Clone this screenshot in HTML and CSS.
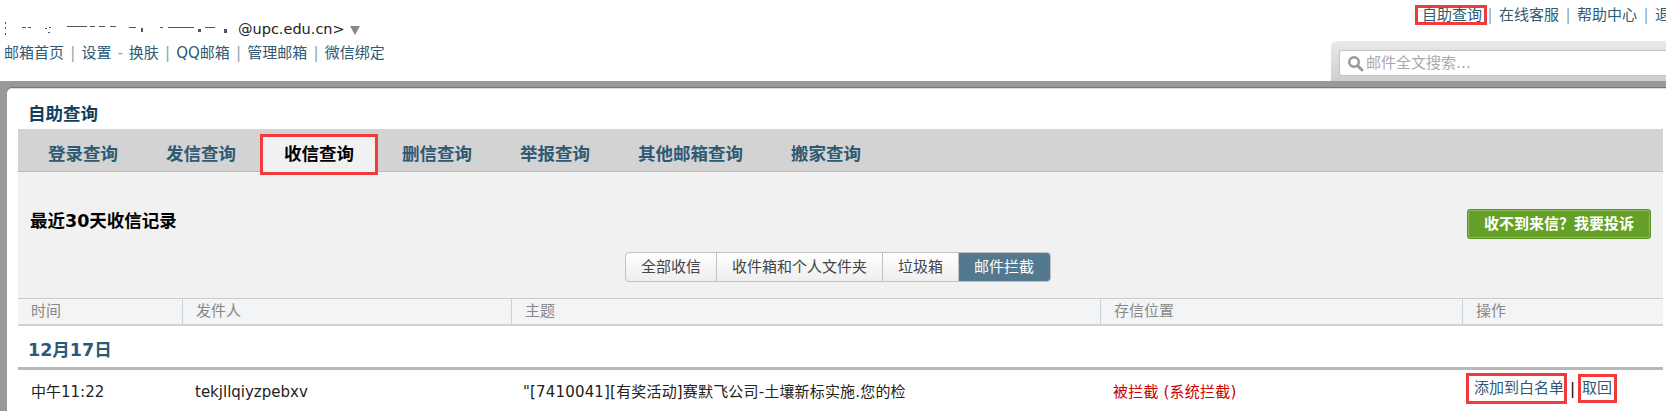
FILE: index.html
```html
<!DOCTYPE html>
<html lang="zh">
<head>
<meta charset="utf-8">
<title>自助查询</title>
<link rel="stylesheet" href="styles.css">
</head>
<body>
<header class="top">
  <div class="account">
    <div class="user">
      <svg class="redact" width="233" height="18" viewBox="0 0 233 18">
        <g fill="#555">
          <rect x="5" y="2" width="1" height="2"/><rect x="5" y="7" width="1" height="2"/><rect x="5" y="13" width="1" height="2"/>
          <rect x="22" y="7" width="4" height="1"/><rect x="28" y="7" width="3" height="1"/>
          <rect x="45" y="8" width="2" height="1"/><rect x="49" y="7" width="2" height="1"/><rect x="48" y="12" width="2" height="1"/>
          <rect x="67" y="6" width="20" height="1"/><rect x="90" y="6" width="5" height="1"/><rect x="99" y="6" width="6" height="1"/><rect x="110" y="6" width="6" height="1"/>
          <rect x="129" y="7" width="7" height="1"/><rect x="141" y="8" width="2" height="4"/>
          <rect x="160" y="7" width="3" height="1"/><rect x="168" y="7" width="26" height="1"/><rect x="198" y="9" width="3" height="3"/><rect x="205" y="7" width="10" height="1"/><rect x="224" y="9" width="3" height="4"/>
        </g>
      </svg>
      <span>@upc.edu.cn&gt;</span><i class="arrow"></i>
    </div>
    <nav class="links">
      <a>邮箱首页</a><span class="sep">|</span><a>设置</a><span class="sep">-</span><a>换肤</a><span class="sep">|</span><a>QQ邮箱</a><span class="sep">|</span><a>管理邮箱</a><span class="sep">|</span><a>微信绑定</a>
    </nav>
  </div>
  <div class="tools">
    <nav class="links help">
      <a class="mark">自助查询</a><span class="sep">|</span><a>在线客服</a><span class="sep">|</span><a>帮助中心</a><span class="sep">|</span><a>退</a>
    </nav>
    <div class="search">
      <div class="search-box">
        <svg class="lens" width="17" height="17" viewBox="0 0 17 17"><circle cx="7" cy="7" r="4.8" fill="none" stroke="#999" stroke-width="2.4"/><path d="M10.6 10.6 15 15" stroke="#999" stroke-width="3" stroke-linecap="round"/></svg>
        <span>邮件全文搜索…</span>
      </div>
    </div>
  </div>
</header>
<main class="frame">
  <div class="card">
    <h1 class="title">自助查询</h1>
    <div class="tabs">
      <a class="tab">登录查询</a><a class="tab">发信查询</a><a class="tab active">收信查询</a><a class="tab">删信查询</a><a class="tab">举报查询</a><a class="tab">其他邮箱查询</a><a class="tab">搬家查询</a>
    </div>
    <section class="panel">
      <div class="panel-head">
        <h2 class="panel-title">最近30天收信记录</h2>
        <a class="complain">收不到来信？我要投诉</a>
      </div>
      <div class="seg">
        <a class="seg-item">全部收信</a><a class="seg-item">收件箱和个人文件夹</a><a class="seg-item">垃圾箱</a><a class="seg-item on">邮件拦截</a>
      </div>
    </section>
    <div class="cols thead">
      <div>时间</div><div>发件人</div><div>主题</div><div>存信位置</div><div>操作</div>
    </div>
    <div class="date">12月17日</div>
    <div class="cols row">
      <div>中午11:22</div>
      <div>tekjllqiyzpebxv</div>
      <div class="subject">"[7410041][有奖活动]赛默飞公司-土壤新标实施.您的检</div>
      <div class="blocked">被拦截 (系统拦截)</div>
      <div class="ops"><a class="mark wide">添加到白名单</a><span class="bar">|</span><a class="mark small">取回</a></div>
    </div>
  </div>
</main>
</body>
</html>
```
FILE: styles.css
```css
* { box-sizing: border-box; }
html, body { margin: 0; height: 411px; overflow: hidden; background: #fff; }
body { font: 15px/20px "DejaVu Sans", "Noto Sans CJK SC", sans-serif; color: #222; }
h1, h2 { margin: 0; }
a { color: #2f5a73; }

.top { display: flex; height: 81px; }
.account { width: 1415px; flex: none; padding: 19px 0 0 0; }
.user { display: flex; align-items: center; height: 20px; font-size: 14.5px; color: #222; }
.redact { flex: none; margin-right: 5px; }
.arrow { width: 0; height: 0; margin: 2px 0 0 5px; border: 5px solid transparent; border-top: 9px solid #888; border-bottom: 0; }
.links { display: flex; align-items: center; height: 20px; white-space: nowrap; }
.links > a { flex: none; }
.account .links { margin: 4px 0 0 4px; }
.sep { width: 18px; text-align: center; color: #8fa3b0; flex: none; }
.account .sep { width: 17.4px; }

.tools { flex: none; width: 251px; }
.help { margin-top: 5px; }
.mark { border: 3px solid #f23a3a; }
.help .mark { width: 72px; height: 20px; line-height: 14px; padding: 0 0 0 4px; margin-right: -6px; overflow: visible; }

.search { margin: 16px 0 0 -84px; width: 335px; height: 40px; padding: 9px 0 5px 8px; background: linear-gradient(#e9e9e9, #cfcfcf); border-radius: 6px 0 0 0; }
.search-box { display: flex; align-items: center; height: 26px; padding-left: 7px; background: #fff; border: 1px solid #c4c4c4; border-right: 0; border-radius: 3px 0 0 3px; color: #aaa; }
.lens { flex: none; margin-right: 2px; }

.frame { background: #999; padding: 7px 0 0 7px; height: 330px; }
.card { height: 323px; padding: 0 3px 0 11px; background: #fff; border-top: 1px solid #ddd; border-top-left-radius: 5px; box-shadow: 0 -1px 0 #777; }
.title { height: 40px; padding: 15px 0 0 10px; font-size: 17.5px; line-height: 20px; color: #123f5c; font-weight: 700; }

.tabs { display: flex; height: 43px; padding-left: 6px; background: #d3d3d3; border-bottom: 1px solid #bbb; }
.tab { height: 41px; margin-top: 5px; padding: 0 21px; border: 3px solid transparent; font-size: 17.5px; line-height: 35px; font-weight: 700; color: #2f5a73; white-space: nowrap; }
.tab.active { background: #f1f1f2; border-color: #f23a3a; color: #000; }

.panel { height: 126px; background: #f1f1f2; padding: 37px 12px 0 12px; }
.panel-head { display: flex; justify-content: space-between; height: 30px; }
.panel-title { font-size: 17.5px; line-height: 24px; font-weight: 700; color: #000; }
.complain { width: 184px; height: 30px; line-height: 28px; text-align: center; font-weight: 700; color: #fff; background: #65a027; border: 1px solid #5a9123; border-radius: 3px; box-shadow: inset 0 0 0 1px #8cbb5c; }

.seg { display: flex; width: max-content; margin: 13px 0 0 595px; height: 30px; border: 1px solid #c2c2c2; border-radius: 4px; overflow: hidden; background: linear-gradient(#fff, #eee); }
.seg-item { padding: 0 15px; line-height: 28px; color: #444; border-right: 1px solid #c2c2c2; white-space: nowrap; }
.seg-item.on { background: #54788e; color: #fff; border-right: 0; padding-right: 16px; }

.cols { display: grid; grid-template-columns: 164px 329px 589px 362px 1fr; }
.thead { height: 28px; background: #f3f4f6; border-top: 1px solid #c5ccd3; border-bottom: 2px solid #ccd1d6; color: #888; line-height: 25px; }
.thead > div { padding-left: 13px; border-left: 1px solid #ccd1d6; }
.thead > div:first-child { border-left: 0; }
.date { height: 44px; padding: 14px 0 0 10px; font-size: 17.5px; line-height: 20px; font-weight: 700; color: #2a5a78; border-bottom: 3px solid #b8b8b8; }
.row { padding-top: 3px; line-height: 38px; }
.row > div { padding-left: 13px; white-space: nowrap; }
.row > .subject { padding-left: 12px; letter-spacing: 0.17px; }
.row > .blocked { color: #c80000; letter-spacing: 0.2px; }
.row > .ops { display: flex; align-items: center; height: 31px; padding-left: 4px; line-height: 22px; }
.ops .mark { height: 31px; line-height: 25px; }
.ops .wide { padding: 0 0 0 5px; }
.ops .small { height: 29px; line-height: 23px; padding: 0 2px 0 1px; }
.bar { width: 11px; text-align: center; color: #000; }
```
